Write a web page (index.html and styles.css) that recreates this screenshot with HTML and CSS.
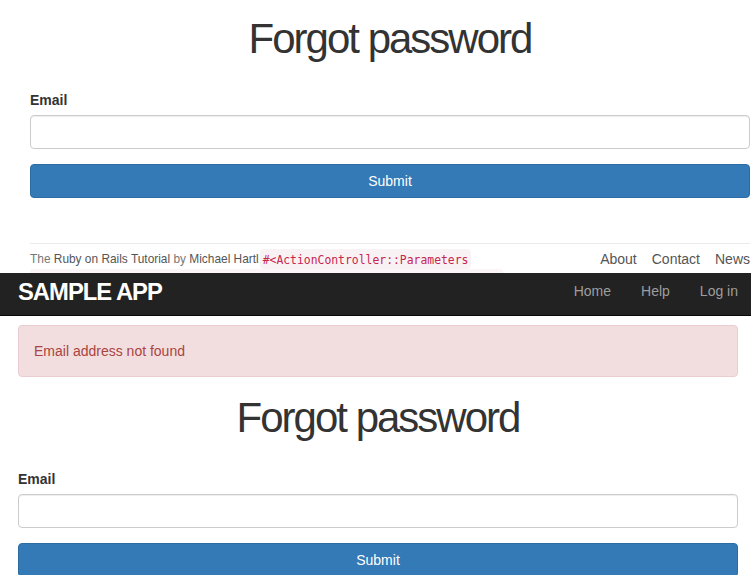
FILE: index.html
```html
<!DOCTYPE html>
<html>
<head>
<meta charset="utf-8">
<title>Forgot password</title>
<link rel="stylesheet" href="styles.css">
</head>
<body>
<div class="container c1">
  <h1 class="title">Forgot password</h1>
  <form class="form">
    <label class="label">Email</label>
    <input class="field" type="email">
    <button class="btn" type="button">Submit</button>
  </form>
  <footer class="footer">
    <div class="footer-left"><small class="credit">The <a class="flink">Ruby on Rails Tutorial</a> by <a class="flink">Michael Hartl</a></small><code class="code">#&lt;ActionController::Parameters</code></div>
    <ul class="footer-nav">
      <li><a class="flink">About</a></li>
      <li><a class="flink">Contact</a></li>
      <li><a class="flink">News</a></li>
    </ul>
  </footer>
  <div class="debug-strip"></div>
</div>
<header class="navbar">
  <a class="logo">sample app</a>
  <nav class="nav">
    <a class="nav-link">Home</a>
    <a class="nav-link">Help</a>
    <a class="nav-link">Log in</a>
  </nav>
</header>
<div class="container c2">
  <div class="alert">Email address not found</div>
  <h1 class="title title2">Forgot password</h1>
  <form class="form">
    <label class="label">Email</label>
    <input class="field" type="email">
    <button class="btn" type="button">Submit</button>
  </form>
</div>
</body>
</html>
```
FILE: styles.css
```css
html, body {
  margin: 0;
  padding: 0;
  height: 575px;
  overflow: hidden;
  background: #fff;
}
body {
  font-family: "Liberation Sans", Arial, Helvetica, sans-serif;
  font-size: 14px;
  line-height: 20px;
  color: #333;
}
.container {
  width: 720px;
}
.c1 {
  margin-left: 30px;
}
.c2 {
  margin-left: 18px;
}
.title {
  margin: 16px 0 28px;
  font-size: 42px;
  line-height: 46px;
  font-weight: 500;
  letter-spacing: -2px;
  text-align: center;
  color: #333;
}
.title2 {
  margin-top: 18px;
}
.form {
  display: flex;
  flex-direction: column;
  margin: 0;
}
.label {
  display: block;
  font-weight: bold;
  height: 20px;
  margin-bottom: 5px;
}
.field {
  box-sizing: border-box;
  height: 34px;
  width: 100%;
  margin: 0 0 15px;
  padding: 6px 12px;
  border: 1px solid #ccc;
  border-radius: 4px;
  box-shadow: inset 0 1px 1px rgba(0,0,0,0.075);
  background: #fff;
  font: inherit;
}
.btn {
  box-sizing: border-box;
  height: 34px;
  width: 100%;
  padding: 6px 12px;
  border: 1px solid #2e6da4;
  border-radius: 4px;
  background: #337ab7;
  color: #fff;
  font-family: inherit;
  font-size: 14px;
  line-height: 20px;
}
.footer {
  margin-top: 45px;
  padding-top: 5px;
  border-top: 1px solid #eaeaea;
  display: flex;
  height: 20px;
  color: #777;
}
.footer-left {
  display: flex;
  align-items: flex-start;
}
.credit {
  font-size: 11.9px;
  line-height: 14px;
  margin-top: 3px;
  white-space: nowrap;
}
.flink {
  color: #555;
  text-decoration: none;
}
.code {
  display: inline-block;
  margin-left: 1px;
  padding: 3px 3px 1px;
  font-family: "DejaVu Sans Mono", "Liberation Mono", monospace;
  font-size: 11.4px;
  line-height: 16px;
  color: #c7254e;
  background: #f9f2f4;
  border-radius: 4px;
  white-space: nowrap;
}
.footer-nav {
  list-style: none;
  margin: 0 0 0 auto;
  padding: 0;
  display: flex;
  gap: 15px;
  white-space: nowrap;
}
.debug-strip {
  width: 473px;
  height: 4px;
  background: #fbf5f7;
  border-radius: 3px 3px 0 0;
}
.navbar {
  box-sizing: border-box;
  height: 43px;
  background: #222;
  border-bottom: 1px solid #080808;
  display: flex;
  align-items: flex-start;
  justify-content: space-between;
  padding: 0 13px 0 18px;
}
.logo {
  margin-top: 7px;
  font-size: 23.8px;
  line-height: 24px;
  font-weight: bold;
  letter-spacing: -1px;
  text-transform: uppercase;
  color: #fff;
}
.nav {
  display: flex;
  gap: 30px;
  margin-top: 8px;
}
.nav-link {
  color: #9d9d9d;
  text-decoration: none;
}
.alert {
  margin-top: 9px;
  padding: 15px;
  border: 1px solid #ebccd1;
  border-radius: 4px;
  background: #f2dede;
  color: #a94442;
}
```
